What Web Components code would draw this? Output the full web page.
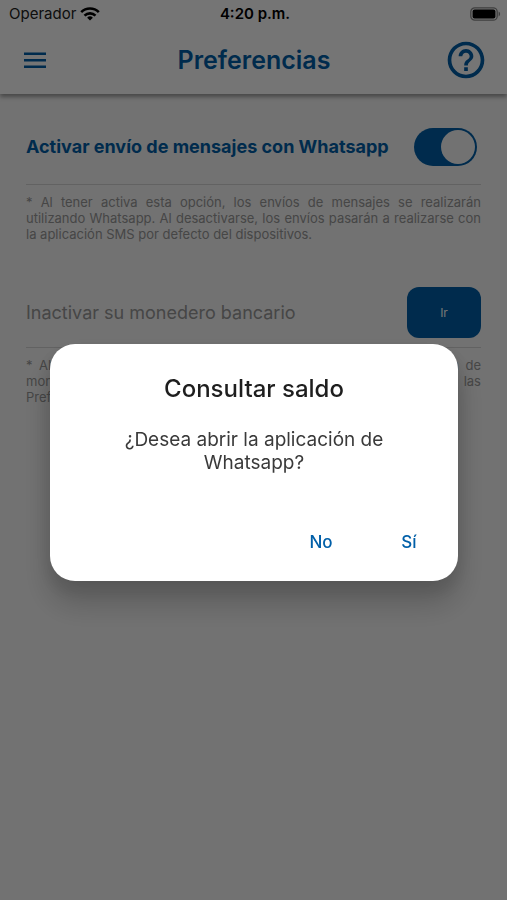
<!DOCTYPE html>
<html lang="es">
<head>
<meta charset="utf-8">
<meta name="viewport" content="width=device-width, initial-scale=1">
<title>Preferencias</title>
<style>
  :root {
    --brand: #005fa8;
    --surface: #ffffff;
    --page: #f8f8f8;
    --muted: #999999;
    --rule: #d6d6d6;
  }
  body { margin: 0; background: var(--page); font-family: Inter, "Liberation Sans", sans-serif; }
</style>
</head>
<body>
<preferences-page></preferences-page>
<script>
  class BaseElement extends HTMLElement {
    constructor() {
      super();
      this.attachShadow({ mode: 'open' }).innerHTML = this.constructor.markup;
    }
  }

  class StatusBar extends BaseElement {
    static markup = `
      <style>
        :host { display: grid; grid-template-columns: 1fr auto 1fr; align-items: center; height: 27px; padding: 0 6px 0 9px; background: var(--surface); color: #000; font-size: 15px; line-height: 20px; }
        .carrier { display: flex; align-items: center; gap: 4px; color: #222; }
        .time { font-weight: 600; }
        .battery { justify-self: end; }
        svg { display: block; }
      </style>
      <div class="carrier"><span>Operador</span>
        <svg width="20" height="14" viewBox="0 0 20 14" fill="none" stroke="#000" stroke-width="2.6" aria-hidden="true">
          <path d="M1.2 5.2a12.4 12.4 0 0 1 17.6 0"/>
          <path d="M4.5 8.6a7.8 7.8 0 0 1 11 0"/>
          <path d="M10 13.6 7.100 10.700a4.100 4.100 0 0 1 5.800 0Z" fill="#000" stroke="none"/>
        </svg>
      </div>
      <span class="time">4:20 p.m.</span>
      <svg class="battery" width="31" height="14" viewBox="0 0 31 14" aria-hidden="true">
        <rect x=".8" y=".8" width="26.4" height="12.4" rx="4" fill="none" stroke="#8a8a8a" stroke-width="1.3"/>
        <rect x="2.6" y="2.6" width="22.8" height="8.8" rx="2" fill="#000"/>
        <path d="M28.6 4.6c2 .8 2 4 0 4.800Z" fill="#8a8a8a"/>
      </svg>`;
  }

  class AppHeader extends BaseElement {
    static markup = `
      <style>
        :host { display: grid; grid-template-columns: 1fr auto 1fr; align-items: center; box-sizing: border-box; height: 67px; padding: 0 19px 2px 20px; background: var(--surface); color: var(--brand); box-shadow: 0 3px 4px rgba(0,0,0,.36); clip-path: inset(0 0 -12px 0); }
        h1 { margin: 0; font-size: 25px; line-height: 32px; font-weight: 600; }
        button { display: grid; place-items: center; width: 44px; height: 44px; margin: 0; padding: 0; border: 0; background: none; color: inherit; }
        .menu { width: 30px; }
        .help { justify-self: end; }
        svg { display: block; }
      </style>
      <button class="menu" aria-label="Abrir menú">
        <svg width="24" height="18" viewBox="0 0 24 18" fill="currentColor"><path d="M1 1.4h22V4H1zM1 8h22v2.6H1zM1 14.4h22V17H1z"/></svg>
      </button>
      <h1><slot></slot></h1>
      <button class="help" aria-label="Ayuda">
        <svg width="44" height="44" viewBox="0 0 24 24" fill="currentColor"><path d="M11 18h2v-2h-2v2zm1-16C6.48 2 2 6.48 2 12s4.48 10 10 10 10-4.48 10-10S17.52 2 12 2zm0 18c-4.41 0-8-3.59-8-8s3.59-8 8-8 8 3.59 8 8-3.59 8-8 8zm0-14c-2.21 0-4 1.79-4 4h2c0-1.1.9-2 2-2s2 .9 2 2c0 2-3 1.75-3 5h2c0-2.25 3-2.5 3-5 0-2.21-1.79-4-4-4z"/></svg>
      </button>`;
  }

  class PreferenceItem extends BaseElement {
    static markup = `
      <style>
        :host { display: block; }
        .row { display: flex; align-items: center; justify-content: space-between; gap: 16px; padding: 9px 0; border-bottom: 1px solid var(--rule); }
        p { margin: 0; padding-top: 9px; color: var(--muted); font-size: 13px; line-height: 16px; text-align: justify; }
      </style>
      <div class="row"><slot name="label"></slot><slot name="control"></slot></div>
      <p><slot></slot></p>`;
  }

  class ToggleSwitch extends BaseElement {
    static markup = `
      <style>
        :host { display: block; }
        label { display: flex; align-items: center; justify-content: space-between; gap: 16px; padding: 9px 4px 9px 0; color: var(--brand); font-size: 18px; line-height: 24px; font-weight: 700; }
        input { appearance: none; flex: none; box-sizing: border-box; display: flex; width: 63px; height: 38px; margin: 0; padding: 2px; border-radius: 19px; background: var(--brand); }
        input::before { content: ""; width: 34px; height: 34px; border-radius: 50%; background: var(--page); }
        input:checked { justify-content: flex-end; }
        input:not(:checked) { background: var(--muted); }
      </style>
      <label><slot></slot><input type="checkbox" role="switch" checked></label>`;
  }

  class ActionButton extends BaseElement {
    static markup = `
      <style>
        :host { display: block; }
        button { display: block; width: 74px; height: 51px; margin: 0; padding: 0; border: 0; border-radius: 12px; background: var(--brand); color: #fff; font: 12px/16px Inter, "Liberation Sans", sans-serif; }
      </style>
      <button><slot></slot></button>`;
  }

  class ConfirmDialog extends BaseElement {
    static markup = `
      <style>
        :host { position: fixed; inset: 0; display: flex; align-items: center; justify-content: center; padding: 24px 49px 0 50px; background: rgba(0,0,0,.54); }
        section { box-sizing: border-box; width: 100%; max-width: 480px; padding: 29px 17px 20px; border-radius: 25px; background: #fff; box-shadow: 0 22px 30px 2px rgba(0,0,0,.18), 0 8px 20px rgba(0,0,0,.12); text-align: center; }
        h2 { margin: 0; color: #1e1e1e; font-size: 24px; line-height: 32px; font-weight: 500; }
        p { margin: 0 45px; padding-top: 23px; color: #3a3a3a; font-size: 19px; line-height: 23px; }
        .actions { display: flex; justify-content: flex-end; gap: 24px; padding-top: 49px; }
        button { min-width: 64px; height: 38px; margin: 0; padding: 0 8px; border: 0; background: none; color: var(--brand); font: 500 17px/24px Inter, "Liberation Sans", sans-serif; }
      </style>
      <section role="dialog" aria-modal="true" aria-labelledby="title">
        <h2 id="title"><slot name="title"></slot></h2>
        <p><slot></slot></p>
        <div class="actions"><button>No</button><button>Sí</button></div>
      </section>`;
  }

  class PreferencesPage extends BaseElement {
    static markup = `
      <style>
        :host { display: flex; flex-direction: column; min-height: 100vh; background: var(--page); }
        main { display: flex; flex-direction: column; gap: 36px; padding: 16px 26px; }
        toggle-switch { flex: 1; }
        .inactive { color: var(--muted); font-size: 18px; line-height: 24px; }
      </style>
      <status-bar></status-bar>
      <app-header>Preferencias</app-header>
      <main>
        <preference-item>
          <toggle-switch slot="control">Activar envío de mensajes con Whatsapp</toggle-switch>
          * Al tener activa esta opción, los envíos de mensajes se realizarán utilizando Whatsapp. Al desactivarse, los envíos pasarán a realizarse con la aplicación SMS por defecto del dispositivos.
        </preference-item>
        <preference-item>
          <span class="inactive" slot="label">Inactivar su monedero bancario</span>
          <action-button slot="control">Ir</action-button>
          * Al inactivar su monedero bancario, se realizará la desvinculación de monedero del dispositivo. Podrá volver a activarlo luego desde las Preferencias.
        </preference-item>
      </main>
      <confirm-dialog><span slot="title">Consultar saldo</span>¿Desea abrir la aplicación de Whatsapp?</confirm-dialog>`;
  }

  customElements.define('status-bar', StatusBar);
  customElements.define('app-header', AppHeader);
  customElements.define('preference-item', PreferenceItem);
  customElements.define('toggle-switch', ToggleSwitch);
  customElements.define('action-button', ActionButton);
  customElements.define('confirm-dialog', ConfirmDialog);
  customElements.define('preferences-page', PreferencesPage);
</script>
</body>
</html>
